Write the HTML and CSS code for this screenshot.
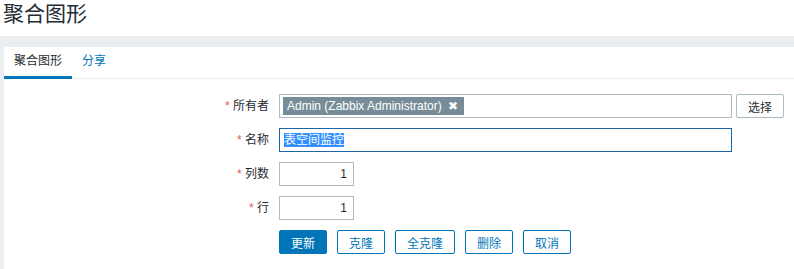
FILE: index.html
```html
<!DOCTYPE html>
<html lang="zh-CN">
<head>
  <meta charset="UTF-8">
  <title>聚合图形</title>
  <link rel="stylesheet" href="styles.css">
</head>
<body>
  <h1 class="page-title">聚合图形</h1>

  <div class="wrapper">
    <div class="panel">
      <ul class="tabs">
        <li class="tab active">聚合图形</li>
        <li class="tab">分享</li>
      </ul>

      <form class="form-list">
        <label class="form-label"><span class="req">*</span> 所有者</label>
        <div class="form-field">
          <div class="multiselect">
            <span class="tag">Admin (Zabbix Administrator) <span class="tag-x">✖</span></span>
          </div>
          <button type="button" class="btn-grey">选择</button>
        </div>

        <label class="form-label"><span class="req">*</span> 名称</label>
        <div class="form-field">
          <div class="text-input focused"><span class="selected">表空间监控</span></div>
        </div>

        <label class="form-label"><span class="req">*</span> 列数</label>
        <div class="form-field">
          <div class="text-input num">1</div>
        </div>

        <label class="form-label"><span class="req">*</span> 行</label>
        <div class="form-field">
          <div class="text-input num">1</div>
        </div>

        <div></div>
        <div class="form-field buttons">
          <button type="button" class="btn-main">更新</button>
          <button type="button" class="btn-alt">克隆</button>
          <button type="button" class="btn-alt">全克隆</button>
          <button type="button" class="btn-alt">删除</button>
          <button type="button" class="btn-alt">取消</button>
        </div>
      </form>
    </div>
  </div>
</body>
</html>
```

FILE: styles.css
```css
:root {
  --fg: #1f2c33;
  --blue: #0275b8;
  --grey-bg: #ebeef0;
  --border: #acbbc2;
}
* {
  box-sizing: border-box;
}
body {
  margin: 0;
  font-family: "Liberation Sans", "Noto Sans CJK SC", sans-serif;
  font-size: 12px;
  color: var(--fg);
  background: #fff;
}
.page-title {
  margin: 0;
  height: 36px;
  padding: 2px 0 0 3px;
  font-size: 21px;
  font-weight: normal;
  line-height: 24px;
}
.wrapper {
  background: var(--grey-bg);
  padding: 11px 0 0 4px;
  height: 233px;
}
.panel {
  background: #fff;
  height: 100%;
}
.tabs {
  list-style: none;
  margin: 0;
  padding: 0;
  display: flex;
  border-bottom: 1px solid var(--grey-bg);
  height: 32px;
}
.tab {
  padding: 0 10px;
  line-height: 29px;
  color: var(--blue);
  border-bottom: 3px solid transparent;
  margin-bottom: -1px;
}
.tab.active {
  color: var(--fg);
  border-bottom-color: var(--blue);
}
.form-list {
  display: grid;
  grid-template-columns: 265px 1fr;
  column-gap: 10px;
  row-gap: 10px;
  padding-top: 15px;
}
.form-label {
  text-align: right;
  line-height: 24px;
}
.req {
  color: #e45959;
}
.form-field {
  display: flex;
  gap: 4px;
  height: 24px;
}
.multiselect {
  width: 453px;
  height: 24px;
  border: 1px solid var(--border);
  padding: 2px 3px;
}
.tag {
  display: inline-block;
  height: 18px;
  line-height: 18px;
  padding: 0 6px 0 4px;
  background: #768d99;
  color: #fff;
}
.tag-x {
  font-size: 12px;
  margin-left: 3px;
}
.text-input {
  width: 453px;
  height: 24px;
  border: 1px solid var(--border);
  padding: 0 4px;
  line-height: 22px;
}
.text-input.focused {
  border-color: #1f65a4;
}
.selected {
  background: #3390ff;
  color: #fff;
}
.text-input.num {
  width: 75px;
  text-align: right;
  padding-right: 6px;
}
button {
  font: inherit;
  height: 24px;
  padding: 0 11px;
  border-radius: 2px;
  cursor: pointer;
}
.btn-grey {
  background: #fff;
  border: 1px solid var(--border);
  color: var(--fg);
}
.buttons {
  gap: 10px;
}
.btn-main {
  background: var(--blue);
  border: 1px solid var(--blue);
  color: #fff;
}
.btn-alt {
  background: #fff;
  border: 1px solid var(--blue);
  color: var(--blue);
}
```
